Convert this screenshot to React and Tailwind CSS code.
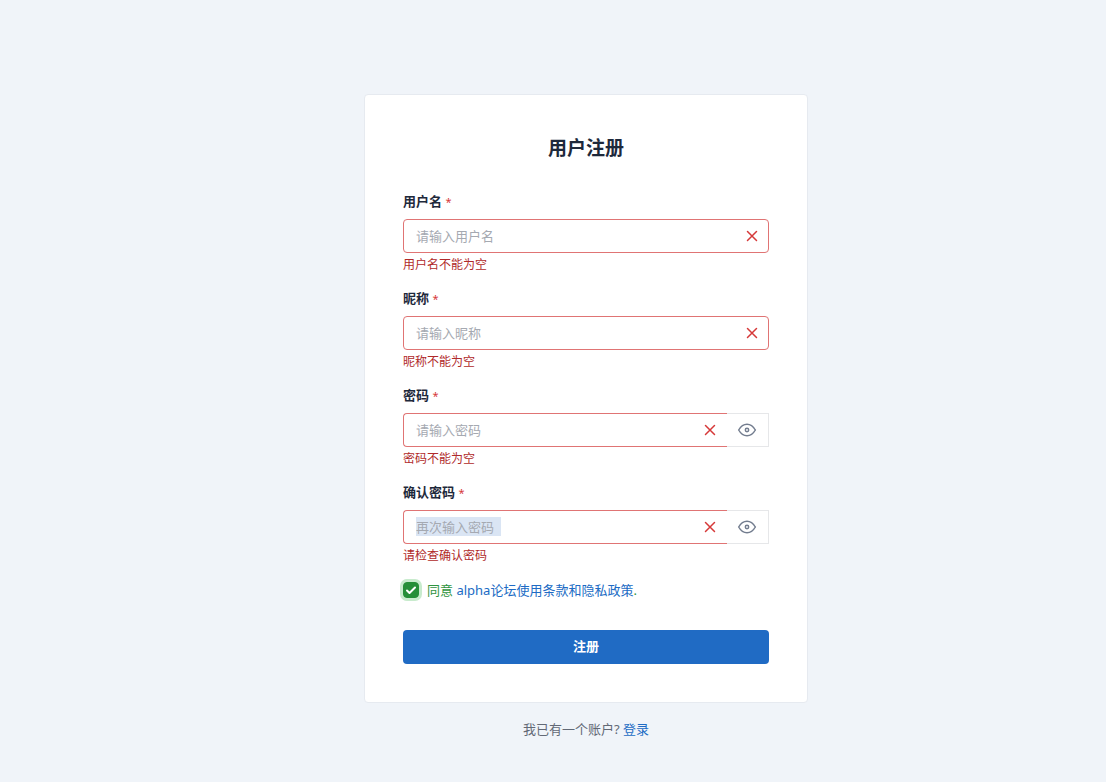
import { useState } from "react";

// ─── form fields ──────────────────────────────────────────────────────
const FIELDS = [
  { id: "username", label: "用户名", placeholder: "请输入用户名", error: "用户名不能为空" },
  { id: "nickname", label: "昵称", placeholder: "请输入昵称", error: "昵称不能为空" },
  { id: "password", label: "密码", placeholder: "请输入密码", error: "密码不能为空", secret: true },
  {
    id: "confirm",
    label: "确认密码",
    placeholder: "再次输入密码",
    error: "请检查确认密码",
    secret: true,
    highlighted: true,
  },
];

const HIGHLIGHT =
  "placeholder:bg-[linear-gradient(#dae5f4,#dae5f4)] placeholder:bg-[length:85px_100%] placeholder:bg-no-repeat";

function CrossIcon() {
  return (
    <svg
      viewBox="0 0 16 16"
      className="pointer-events-none absolute right-[9px] top-1/2 size-4 -translate-y-1/2"
      fill="none"
      stroke="#d63939"
      strokeWidth="1.5"
      strokeLinecap="round"
      aria-hidden="true"
    >
      <path d="M3.5 3.5l9 9M12.5 3.5l-9 9" />
    </svg>
  );
}

function EyeIcon() {
  return (
    <svg
      viewBox="0 0 24 24"
      className="size-5"
      fill="none"
      stroke="currentColor"
      strokeWidth="1.8"
      strokeLinecap="round"
      strokeLinejoin="round"
      aria-hidden="true"
    >
      <circle cx="12" cy="12" r="2" />
      <path d="M22 12c-2.667 4.667 -6 7 -10 7s-7.333 -2.333 -10 -7c2.667 -4.667 6 -7 10 -7s7.333 2.333 10 7" />
    </svg>
  );
}

// ══════════════════════════════════════════════════════════════════════
// Field — label, input and validation message
//
// Props:
//   field  {object}  — { id, label, placeholder, error, secret, highlighted }
// ══════════════════════════════════════════════════════════════════════
function Field({ field }) {
  const [visible, setVisible] = useState(false);
  const { id, label, placeholder, error, secret, highlighted } = field;

  return (
    <div className="mb-3.5">
      <label htmlFor={id} className="mb-2 block leading-5 font-semibold">
        {label} <span className="text-[11px] leading-none font-normal text-[#d63939]">*</span>
      </label>

      <div className="flex">
        <div className="relative min-w-0 flex-1">
          <input
            id={id}
            type={secret && !visible ? "password" : "text"}
            placeholder={placeholder}
            aria-invalid="true"
            aria-describedby={`${id}-error`}
            className={`block h-[34px] w-full border border-[#e07474] bg-white pr-8 pl-3 leading-5 outline-none placeholder:text-[#a5a9b1] ${
              secret ? "rounded-l border-r-0" : "rounded"
            } ${highlighted ? HIGHLIGHT : ""}`}
          />
          <CrossIcon />
        </div>
        {secret && (
          <button
            type="button"
            aria-label="显示密码"
            onClick={() => setVisible(!visible)}
            className="flex w-[42px] items-center justify-center border border-l-0 border-[#e6e7e9] pr-0.5 text-[#737d8f]"
          >
            <EyeIcon />
          </button>
        )}
      </div>

      <p id={`${id}-error`} className="mt-[3px] text-xs leading-[18px] text-[#b02a2a]">
        {error}
      </p>
    </div>
  );
}

export default function App() {
  const [agreed, setAgreed] = useState(true);

  return (
    <main className="min-h-screen bg-[#f0f4f9] pt-[94px] pb-8 pl-[66px] font-['Noto_Sans','Noto_Sans_CJK_SC',sans-serif] text-[13px] text-[#1e293b]">
      <div className="mx-auto max-w-[444px]">
        <form
          className="rounded border border-[#e6eaf0] bg-white p-[38px]"
          onSubmit={(e) => e.preventDefault()}
        >
          <h1 className="mb-7 text-center text-[19px] leading-[30px] font-semibold">用户注册</h1>

          {FIELDS.map((field) => (
            <Field key={field.id} field={field} />
          ))}

          {/* terms */}
          <div className="mb-[29px] flex items-center leading-[22px]">
            <span className="relative mr-2 flex">
              <input
                id="terms"
                type="checkbox"
                checked={agreed}
                onChange={(e) => setAgreed(e.target.checked)}
                className="size-4 appearance-none rounded border border-[#258f38] bg-white ring-3 ring-[#c8ebcd] outline-none checked:bg-[#258f38]"
              />
              {agreed && (
                <svg
                  viewBox="0 0 16 16"
                  className="pointer-events-none absolute inset-0 size-4"
                  fill="none"
                  stroke="#fff"
                  strokeWidth="2"
                  strokeLinecap="round"
                  strokeLinejoin="round"
                  aria-hidden="true"
                >
                  <path d="M4 8.5l2.5 2.5 5.5-5.5" />
                </svg>
              )}
            </span>
            <label htmlFor="terms" className="text-[#2f9440]">
              同意{" "}
              <a href="#terms" className="text-[#206bc4]">
                alpha论坛使用条款和隐私政策
              </a>
              .
            </label>
          </div>

          <button
            type="submit"
            className="block h-[34px] w-full rounded bg-[#206bc4] font-semibold text-white"
          >
            注册
          </button>
        </form>

        <p className="mt-4 text-center leading-5 text-[#626976]">
          我已有一个账户?{" "}
          <a href="#login" className="text-[#206bc4]">
            登录
          </a>
        </p>
      </div>
    </main>
  );
}
